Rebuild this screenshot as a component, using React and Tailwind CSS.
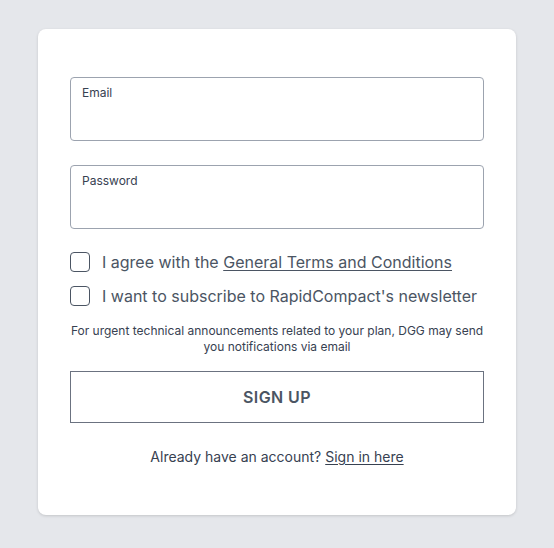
export default function App() {
  return (
    <div className="min-h-screen bg-[#e5e7eb] flex justify-center pt-[29px] pb-[33px]" style={{ fontFamily: "Inter, 'Noto Sans', sans-serif" }}>
      <div className="w-[478px] bg-white rounded-lg shadow-[0_1px_3px_rgba(0,0,0,0.15)] px-8 pt-12 pb-12 flex flex-col">
        <label className="block h-16 border border-[#9ca3af] rounded px-[11px] pt-[7px]">
          <span className="block text-xs leading-4 text-[#374151]">Email</span>
          <input type="email" className="w-full outline-none text-sm" />
        </label>
        <label className="block h-16 border border-[#9ca3af] rounded px-[11px] pt-[7px] mt-6">
          <span className="block text-xs leading-4 text-[#374151]">Password</span>
          <input type="password" className="w-full outline-none text-sm" />
        </label>
        <div className="mt-[21px] flex items-center gap-3 h-6">
          <span className="w-5 h-5 border-[1.5px] border-[#4b5563] rounded-[4px] shrink-0" />
          <span className="text-base text-[#4b5563]">
            I agree with the <span className="underline underline-offset-2">General Terms and Conditions</span>
          </span>
        </div>
        <div className="mt-[10px] flex items-center gap-3 h-6">
          <span className="w-5 h-5 border-[1.5px] border-[#4b5563] rounded-[4px] shrink-0" />
          <span className="text-base text-[#4b5563]">I want to subscribe to RapidCompact's newsletter</span>
        </div>
        <p className="mt-[15px] text-xs leading-4 text-[#374151] text-center">
          For urgent technical announcements related to your plan, DGG may send
          <br />
          you notifications via email
        </p>
        <button className="mt-4 h-[52px] border border-[#6b7280] text-base font-semibold text-[#4b5563] tracking-wide">
          SIGN UP
        </button>
        <p className="mt-6 text-sm leading-5 text-[#374151] text-center">
          Already have an account? <span className="underline underline-offset-2">Sign in here</span>
        </p>
      </div>
    </div>
  );
}
